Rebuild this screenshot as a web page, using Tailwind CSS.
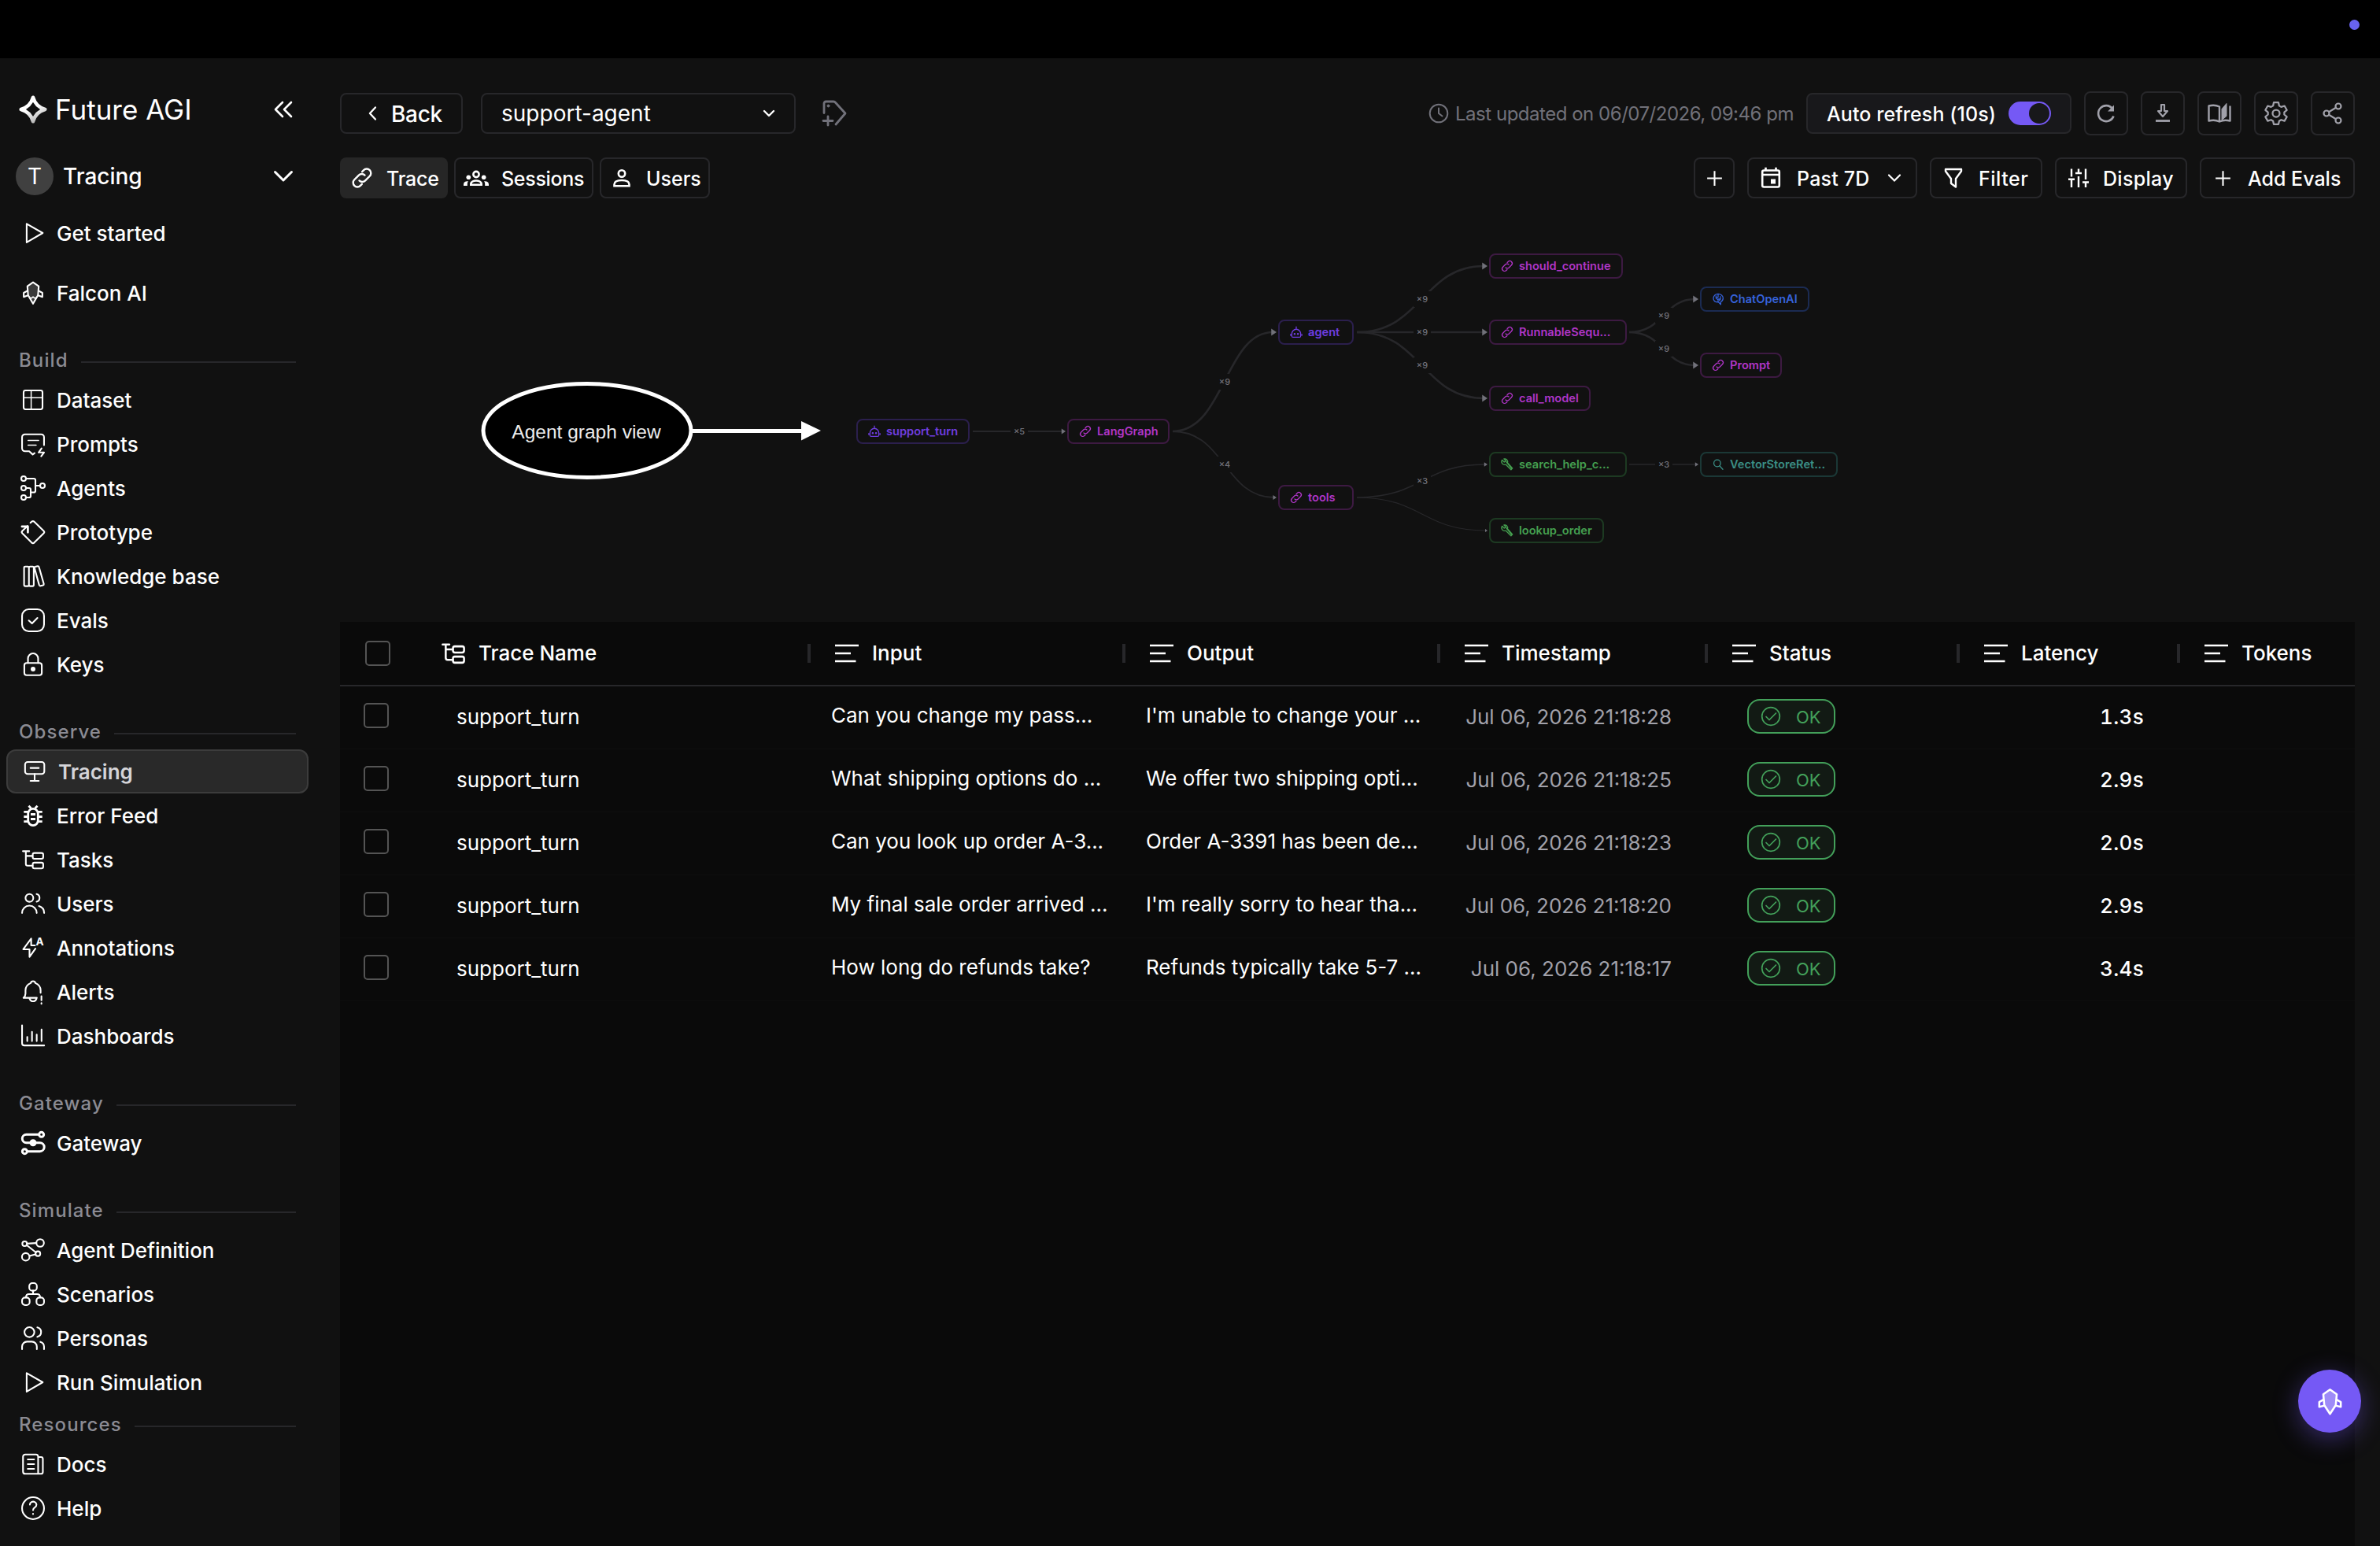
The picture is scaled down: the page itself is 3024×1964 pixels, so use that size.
<!DOCTYPE html>
<html lang="en">
<head>
    <meta charset="UTF-8">
    <meta name="viewport" content="width=device-width, initial-scale=1.0">
    <title>Future AGI - Tracing</title>
    <script src="https://cdn.jsdelivr.net/npm/@tailwindcss/browser@4"></script>
</head>
<body class="w-[3024px] h-[1964px] overflow-hidden bg-[#111111] text-white font-['Inter',sans-serif] flex flex-col">
    <!-- Icon sprite -->
    <svg class="hidden">
        <symbol id="i-play" viewBox="0 0 24 24"><path d="M6.6 4.2 20.2 12 6.6 19.9z"/></symbol>
        <symbol id="i-falcon" viewBox="0 0 24 24"><path d="M12 3.1 16.8 6.4 16.2 14 12 21.2 7.8 14 7.2 6.4z" fill="currentColor" fill-opacity=".18"/><path d="M7.3 10.2 4.1 12v3.5l3.6-1.4M16.7 10.2l3.2 1.8v3.5l-3.6-1.4"/><path d="m8.6 15.4 1.7 1.3 1.7-1.3 1.7 1.3 1.7-1.3" stroke-width="1"/></symbol>
        <symbol id="i-dataset" viewBox="0 0 24 24"><rect x="4" y="4" width="16" height="16" rx="1.6"/><path d="M10.4 4v16M4 10.2h16" stroke-width="1"/></symbol>
        <symbol id="i-prompts" viewBox="0 0 24 24"><path d="M21.3 13V6.3a2.5 2.5 0 0 0-2.5-2.5H5.2a2.5 2.5 0 0 0-2.5 2.5v9.4a2.5 2.5 0 0 0 2.5 2.5h3.5l3 2.7 1.6-1.2"/><path d="M7.8 9h8.9M7.8 13h6.8" stroke-width="1.1"/><path d="m19.2 15.8-2.5 3.4h4.6l-2.4 3.2"/></symbol>
        <symbol id="i-agents" viewBox="0 0 24 24"><circle cx="4" cy="4" r="2"/><circle cx="4" cy="12" r="2"/><circle cx="4" cy="20" r="2"/><circle cx="20" cy="10" r="2"/><path d="M6 4h6.6q1.4 0 1.4 1.4v8.9q0 1.4-1.4 1.4H10M6 12h2.6q1.4 0 1.4 1.4v5.2q0 1.4-1.4 1.4H6M14 10h4"/></symbol>
        <symbol id="i-prototype" viewBox="0 0 24 24"><path d="m9.8 4.1 1-.9q1.1-1 2.2 0l8 7.8q1 1 0 2l-8 7.9q-1.1 1-2.2 0L2.9 13q-1-1 0-2L7.3 6.8"/><path d="M2.6 7.2h5v5" stroke-width="1.8"/></symbol>
        <symbol id="i-books" viewBox="0 0 24 24"><path d="M4.4 4.8q0-1 1-1h2.1q1 0 1 1v14.6q0 1-1 1H5.4q-1 0-1-1zM8.5 4.8q0-1 1-1h2.1q1 0 1 1v14.6q0 1-1 1H9.5q-1 0-1-1zM13.2 5.1q-.3-.9.6-1.1l2-.5q1-.2 1.2.7l4.1 14.3q.2.9-.7 1.2l-2 .5q-.9.2-1.2-.7z"/></symbol>
        <symbol id="i-evals" viewBox="0 0 24 24"><rect x="2.7" y="2.7" width="18.6" height="18.6" rx="5.6"/><path d="m8.4 12.2 2.7 2.4 4.6-4.6"/></symbol>
        <symbol id="i-lock" viewBox="0 0 24 24"><rect x="4.6" y="10.8" width="14.8" height="10.4" rx="2"/><path d="M7.7 10.8V7a4.3 4.3 0 0 1 8.6 0v3.8"/><circle cx="12" cy="16" r="1.3" fill="currentColor"/></symbol>
        <symbol id="i-tracing" viewBox="0 0 24 24"><rect x="3.9" y="4" width="16.3" height="10.2" rx="2.2"/><path d="M8.5 9.1h7M12 14.2V20M8.5 20h7"/></symbol>
        <symbol id="i-bug" viewBox="0 0 24 24"><rect x="7.8" y="6.2" width="8.4" height="14.2" rx="4.2" stroke-width="1.9"/><path d="M4.2 8.9h3.6M4.2 13h3.6M4.2 17.1h3.6M16.2 8.9h3.6M16.2 13h3.6M16.2 17.1h3.6M8.3 3.8l2 2M15.7 3.8l-2 2M10 11h4M10 15h4" stroke-width="1.9" stroke-linecap="butt"/></symbol>
        <symbol id="i-tree" viewBox="0 0 24 24"><path d="M3.4 4.9h5.4M5.9 4.9v10.8q0 1.5 1.5 1.5h4.2M5.9 8.9h5.7"/><rect x="11.7" y="6.4" width="8.9" height="4.9" rx="1.5"/><rect x="11.7" y="14.6" width="8.9" height="4.9" rx="1.5"/></symbol>
        <symbol id="i-users" viewBox="0 0 24 24"><circle cx="8.9" cy="7.1" r="3.3"/><path d="M2.7 19.9a6.2 6.2 0 0 1 12.4 0M15 3.9a3.3 3.3 0 0 1 0 6.4M17 14a6.2 6.2 0 0 1 4.4 5.9"/></symbol>
        <symbol id="i-annot" viewBox="0 0 24 24"><path d="M14 12.7 9 19.7v-6.4H3.7L10.4 4.3V10h3.2"/><text x="14.4" y="10.2" font-size="9" font-weight="700" fill="currentColor" stroke="none" font-family="Inter">A</text></symbol>
        <symbol id="i-alert" viewBox="0 0 24 24"><path d="M15.2 17.1H3.9q1.7-1.4 1.7-3.6v-2.9q0-4 4.4-6a2.05 2.05 0 0 1 4 0q4.4 2 4.4 6v2.2M8.9 17.4a3.2 3.5 0 0 0 6.2 0M19.1 15.7v3.5M19.1 21.6v.5"/></symbol>
        <symbol id="i-dash" viewBox="0 0 24 24"><path d="M2.7 3v15.2q0 1.9 1.9 1.9h16.8M7.1 12.9v3.5M11.1 8.6v7.8M15.1 10.9v5.5M19.2 6.6v9.8"/></symbol>
        <symbol id="i-gateway" viewBox="0 0 24 24"><g stroke-width="2"><circle cx="19.1" cy="4.9" r="2"/><circle cx="4.9" cy="19.1" r="2"/><path d="M17 4.9H6.3a3.4 3.4 0 0 0 0 6.9h11.5a3.6 3.6 0 0 1 0 7.3H7"/><circle cx="12" cy="11.8" r="2" fill="currentColor"/></g></symbol>
        <symbol id="i-agentdef" viewBox="0 0 24 24"><circle cx="4.9" cy="6.7" r="2"/><circle cx="18" cy="6" r="3.2"/><circle cx="5.8" cy="17.8" r="3.2"/><circle cx="16.1" cy="15.1" r="2"/><path d="m6.9 6.6 7.9-.5M6.6 7.8l7.8 6.2M8.9 17l5.2-1.3"/></symbol>
        <symbol id="i-scenarios" viewBox="0 0 24 24"><rect x="8.8" y="2.7" width="6.4" height="6.4" rx="2.5"/><rect x="2.7" y="14.9" width="6.4" height="6.4" rx="2.5"/><rect x="14.9" y="14.9" width="6.4" height="6.4" rx="2.5"/><path d="M12 9.1V12M6 14.9q0-2.9 2.6-2.9h6.8q2.6 0 2.6 2.9"/></symbol>
        <symbol id="i-personas" viewBox="0 0 24 24"><circle cx="8.9" cy="6.9" r="4.2"/><path d="M15.6 2.9a4.1 4.1 0 0 1 0 8M2.7 21.3v-2.2a4.2 4.2 0 0 1 4.2-4.2H11a4.2 4.2 0 0 1 4.2 4.2v2.2M18.2 15.1a4.2 4.2 0 0 1 3.1 4v2.2"/></symbol>
        <symbol id="i-docs" viewBox="0 0 24 24"><path d="M16.3 20.2H5.4a1.9 1.9 0 0 1-1.9-1.9V5.7a1.9 1.9 0 0 1 1.9-1.9h9q1.9 0 1.9 1.9zM16.3 6h2.4q1.6 0 1.6 1.6v11q0 1.6-1.6 1.6h-2.4M7.5 8h5.4M7.5 12h5.4M7.5 16h5.4"/></symbol>
        <symbol id="i-help" viewBox="0 0 24 24"><circle cx="12" cy="12" r="9.3"/><path d="M9.3 9a2.8 2.6 0 1 1 4.3 2.2q-1.6.9-1.6 2.4M12 16.7v.3"/></symbol>
        <symbol id="i-link" viewBox="0 0 24 24"><path d="M14.6 9.4a4 4 0 0 0-5.7 0l-4.2 4.3a4 4 0 0 0 5.7 5.7l1.5-1.5M9.4 14.6a4 4 0 0 0 5.7 0l4.2-4.3a4 4 0 0 0-5.7-5.7l-1.5 1.5"/></symbol>
        <symbol id="i-bot" viewBox="0 0 24 24"><path d="M6.5 20.5h11a2 2 0 0 0 2-2v-3.500a7.500 8 0 0 0-15 0v3.500a2 2 0 0 0 2 2zM12 7V3M2.500 15.500v2M21.500 15.500v2"/><circle cx="9.200" cy="15" r=".9" fill="currentColor"/><circle cx="14.800" cy="15" r=".9" fill="currentColor"/></symbol>
        <symbol id="i-wrench" viewBox="0 0 24 24"><path d="M3.500 4.500 7 8l2.500-2.500L6.500 2.600a5 5 0 0 1 6 6.400l8.500 9.500-2.500 2.500L9.500 12a5 5 0 0 1-6-7.500zM9.500 6.500 19 18.500"/></symbol>
        <symbol id="i-search" viewBox="0 0 24 24"><circle cx="10.5" cy="10" r="5.7"/><path d="m14.500 14.300 5.500 6"/></symbol>
        <symbol id="i-brain" viewBox="0 0 24 24"><path d="M12 3.200a8 7.500 0 0 0-8 7.300c0 4.500 4 6.500 8.500 6.500l4 4v-4.300a7.500 7.500 0 0 0 4-6.200c0-4.300-4-7.300-8.500-7.300zM12 3.500v5l-3.500 2M12 12h4M8.500 6.500v4l3.500 3v3M16 7.500v4.500l-2 2.500"/></symbol>
        <symbol id="i-lines" viewBox="0 0 30 24"><path d="M0 2h30M0 12h20M0 22h26.500" stroke-width="2.6" stroke-linecap="butt"/></symbol>
        <symbol id="i-plus" viewBox="0 0 24 24"><path d="M12 3v18M3 12h18"/></symbol>
    </svg>

    <!-- Top strip -->
    <div class="h-[74px] shrink-0 bg-black flex justify-end items-start pt-[25px] pr-[26px]">
        <div class="size-[13px] rounded-full bg-[#6862ee]"></div>
    </div>

    <div class="flex flex-1 min-h-0">
        <!-- Sidebar -->
        <aside class="w-[400px] shrink-0 flex flex-col">
            <div class="h-[50px] mt-[40px] ml-6 mr-[26px] flex items-center">
                <svg class="size-9" viewBox="0 0 24 24" fill="none" stroke="url(#logoGrad)" stroke-width="3" stroke-linejoin="round">
                    <linearGradient id="logoGrad" gradientUnits="userSpaceOnUse" x1="8" y1="4" x2="16" y2="22">
                        <stop offset="0.4" stop-color="#ffffff"/>
                        <stop offset="1" stop-color="#b5b5b5"/>
                    </linearGradient>
                    <path d="M12 1.800Q14.200 9.800 22.200 12 14.200 14.200 12 22.200 9.800 14.200 1.800 12 9.800 9.800 12 1.800z"/>
                </svg>
                <span class="ml-[10px] text-[35px] leading-none">Future AGI</span>
                <svg class="size-9 ml-auto -mr-[4px]" viewBox="0 0 36 36" fill="none" stroke="#fff" stroke-width="2.6" stroke-linecap="round" stroke-linejoin="round"><path d="m17 9-9 9 9 9M28 9l-9 9 9 9"/></svg>
            </div>
            <div class="h-12 mt-[36px] ml-5 mr-[22px] flex items-center">
                <div class="size-12 rounded-full bg-[#404040] flex items-center justify-center text-[28px] leading-none">T</div>
                <span class="ml-3 text-[28px] leading-none font-medium">Tracing</span>
                <svg class="size-9 ml-auto" viewBox="0 0 36 36" fill="none" stroke="#fff" stroke-width="3" stroke-linecap="round" stroke-linejoin="round"><path d="m7.500 12.500 10.500 10.500 10.500-10.500"/></svg>
            </div>
            <nav id="nav" class="mt-5"></nav>
        </aside>

        <!-- Main -->
        <main class="flex-1 min-w-0 pl-8 pr-8 flex flex-col">
            <!-- Header -->
            <div class="mt-[42px] h-14 flex items-center">
                <button class="w-[156px] h-[52px] border-2 border-[#27272a] rounded-lg flex items-center pl-[26px]">
                    <svg class="size-7" viewBox="0 0 24 24" fill="none" stroke="#fff" stroke-width="2" stroke-linecap="round" stroke-linejoin="round"><path d="M14.500 5.500 8.500 12l6 6.500"/></svg>
                    <span class="ml-[9px] pt-[2px] text-[28px] leading-none font-medium tracking-[-0.3px]">Back</span>
                </button>
                <div class="ml-[23px] w-[400px] h-[52px] border-2 border-[#27272a] rounded-lg flex items-center pl-[24px] pr-[20px]">
                    <span class="text-[28px] leading-none">support-agent</span>
                    <svg class="size-6 ml-auto" viewBox="0 0 24 24" fill="none" stroke="#fff" stroke-width="2.4" stroke-linecap="round" stroke-linejoin="round"><path d="m6 9 6 6 6-6"/></svg>
                </div>
                <svg class="size-9 ml-[32px]" viewBox="0 0 36 36" fill="none" stroke="#71717a" stroke-width="2.8" stroke-linecap="round" stroke-linejoin="round"><path d="M4 17.500V5.500q0-2.500 2.500-2.500H16q1.500 0 2.500 1.200L31 18 19 32"/><circle cx="9.5" cy="8.5" r="1.5" fill="#71717a" stroke-width="1"/><path d="M9 22v11M3 27.500h12"/></svg>

                <div class="ml-auto flex items-center">
                    <svg class="size-[30px]" viewBox="0 0 30 30" fill="none" stroke="#71717a" stroke-width="2" stroke-linecap="round" stroke-linejoin="round"><circle cx="15" cy="15" r="11.3"/><path d="M15 8.500V15l4.500 3.500"/></svg>
                    <span class="ml-[6px] w-[446px] pt-[2px] text-[24px] leading-none text-[#71717a] tracking-[-0.48px] whitespace-nowrap">Last updated on 06/07/2026, 09:46 pm</span>
                    <div class="w-[337px] h-[52px] border-2 border-[#27272a] rounded-lg bg-[#18181b] flex items-center pl-[24px] pr-[24px]">
                        <span class="pt-[2px] text-[25px] leading-none font-medium tracking-[0.08px] whitespace-nowrap">Auto refresh (10s)</span>
                        <div class="ml-auto w-[54px] h-[30px] rounded-full bg-[#7559f5] flex items-center justify-end pr-[2px]">
                            <div class="size-[26px] rounded-full bg-[#18181b]"></div>
                        </div>
                    </div>
                    <div class="ml-4 flex gap-4 text-[#a1a1aa]">
                        <button class="size-14 border-2 border-[#27272a] rounded-lg flex items-center justify-center">
                            <svg class="size-8" viewBox="0 0 32 32" fill="none" stroke="currentColor" stroke-width="2.6"><path d="M25.500 19.500a10 10 0 1 1-1.500-9.500"/><path d="M26 5.500v8h-8z" fill="currentColor" stroke="none"/></svg>
                        </button>
                        <button class="size-14 border-2 border-[#27272a] rounded-lg flex items-center justify-center">
                            <svg class="size-8" viewBox="0 0 32 32" fill="none" stroke="currentColor" stroke-width="2.2" stroke-linejoin="round"><path d="M14 5h4v8h4l-6 7-6-7h4z"/><path d="M7 25.500h18" stroke-width="2.8"/></svg>
                        </button>
                        <button class="size-14 border-2 border-[#27272a] rounded-lg flex items-center justify-center">
                            <svg class="size-9" viewBox="0 0 36 36" fill="none" stroke="currentColor" stroke-width="2.4" stroke-linejoin="round"><path d="M18 9.500Q12 6.500 4.500 8.500v19q7.500-2 13.500 1V9.500zM18 28.500q6-3 13.500-1v-19"/><path d="m21 12.500 6-7v16l-6 5z" fill="currentColor" stroke-width="1"/></svg>
                        </button>
                        <button class="size-14 border-2 border-[#27272a] rounded-lg flex items-center justify-center">
                            <svg class="size-9" viewBox="0 0 24 24" fill="none" stroke="currentColor" stroke-width="1.5" stroke-linejoin="round"><circle cx="12" cy="12" r="3"/><path d="M10 2.800h4l.6 2.800 1.700 1 2.800-.9 2 3.500-2.200 1.900v1.900l2.200 1.900-2 3.500-2.800-.9-1.700 1-.6 2.700h-4l-.6-2.700-1.700-1-2.800.9-2-3.500 2.200-1.900v-1.900L2.900 9.200l2-3.500 2.800.9 1.700-1z"/></svg>
                        </button>
                        <button class="size-14 border-2 border-[#27272a] rounded-lg flex items-center justify-center">
                            <svg class="size-8" viewBox="0 0 32 32" fill="none" stroke="currentColor" stroke-width="2.2"><circle cx="8" cy="16" r="3.5"/><circle cx="23" cy="7" r="3.5"/><circle cx="23" cy="25" r="3.5"/><path d="m11 14.200 9-5.400M11 17.800l9 5.400"/></svg>
                        </button>
                    </div>
                </div>
            </div>

            <!-- Tabs and filters -->
            <div class="mt-[28px] h-[52px] flex items-center text-[25px] leading-none font-medium">
                <button class="w-[137px] h-[52px] rounded-lg bg-[#262626] flex items-center pl-[12px]">
                    <svg class="size-8" fill="none" stroke="#fff" stroke-width="1.8" stroke-linecap="round"><use href="#i-link"/></svg>
                    <span class="ml-[15px] pt-[2px] tracking-[-0.2px]">Trace</span>
                </button>
                <button class="ml-2 w-[177px] h-[52px] border-2 border-[#27272a] rounded-lg flex items-center pl-[10px]">
                    <svg class="size-8" viewBox="0 0 32 32" fill="#fff"><path d="M8 26v-2.500q0-2.700 2.800-4 2.300-1.200 5.200-1.200t5.200 1.200q2.800 1.300 2.800 4V26zM0 26v-2q0-2.500 2.800-3.400 1.500-.5 3.200-.3-1.200 1.400-1.200 3.200V26zM32 26v-2q0-2.500-2.800-3.400-1.500-.5-3.200-.3 1.200 1.400 1.200 3.200V26z"/><path d="M10.700 23.600q.3-2.800 5.300-2.800t5.300 2.800z" fill="#111"/><circle cx="16" cy="11.5" r="3.6" fill="none" stroke="#fff" stroke-width="2.6"/><circle cx="6.3" cy="15.2" r="2.8"/><circle cx="25.7" cy="15.2" r="2.8"/></svg>
                    <span class="ml-[16px] pt-[2px] tracking-[-0.3px]">Sessions</span>
                </button>
                <button class="ml-2 w-[140px] h-[52px] border-2 border-[#27272a] rounded-lg flex items-center pl-[10px]">
                    <svg class="size-8" viewBox="0 0 32 32" fill="none" stroke="#fff" stroke-width="2.6"><circle cx="16" cy="10.5" r="4.2"/><path d="M6.500 26.200v-2q0-5.200 9.500-5.200t9.500 5.200v2z"/></svg>
                    <span class="ml-[15px] pt-[2px]">Users</span>
                </button>

                <div class="ml-auto flex gap-4">
                    <button class="w-[52px] h-[52px] border-2 border-[#27272a] rounded-lg flex items-center justify-center">
                        <svg class="size-[25px]" fill="none" stroke="#fff" stroke-width="2"><use href="#i-plus"/></svg>
                    </button>
                    <button class="w-[216px] h-[52px] border-2 border-[#27272a] rounded-lg flex items-center pl-[12px]">
                        <svg class="size-8" viewBox="0 0 32 32" fill="none" stroke="#fff" stroke-width="2.6"><rect x="5.2" y="6.5" width="21.6" height="21" rx="2"/><path d="M5 12h22M9.500 2.800v4M22.500 2.800v4"/><rect x="16" y="17.5" width="6" height="6" fill="#fff" stroke="none"/></svg>
                        <span class="ml-[17px] pt-[2px] tracking-[0.2px]">Past 7D</span>
                        <svg class="size-6 ml-[19px]" viewBox="0 0 24 24" fill="none" stroke="#fff" stroke-width="2.2" stroke-linecap="round"><path d="m5 8.500 7 7 7-7"/></svg>
                    </button>
                    <button class="w-[143px] h-[52px] border-2 border-[#27272a] rounded-lg flex items-center pl-[12px]">
                        <svg class="size-8" viewBox="0 0 32 32" fill="none" stroke="#fff" stroke-width="2.4" stroke-linejoin="round"><path d="M6 5h20v2.500l-7 9.500v10.500l-6-4.500v-6L6 7.500z"/></svg>
                        <span class="ml-[16px] pt-[2px] tracking-[0.5px]">Filter</span>
                    </button>
                    <button class="w-[168px] h-[52px] border-2 border-[#27272a] rounded-lg flex items-center pl-[12px]">
                        <svg class="size-8" viewBox="0 0 32 32" fill="none" stroke="#fff" stroke-width="2.4"><path d="M7 4.500v10M7 19v9M16 4.500v5M16 14v14M25 4.500V18M25 22.500V28M3 17.800h8M12 10h8M21 21.500h8"/></svg>
                        <span class="ml-[15px] pt-[2px] tracking-[0.3px]">Display</span>
                    </button>
                    <button class="w-[197px] h-[52px] border-2 border-[#27272a] rounded-lg flex items-center pl-[15px]">
                        <svg class="size-[25px]" fill="none" stroke="#fff" stroke-width="2"><use href="#i-plus"/></svg>
                        <span class="ml-[19px] pt-[2px]">Add Evals</span>
                    </button>
                </div>
            </div>

            <!-- Agent graph: free canvas, node coordinates are canvas pixels -->
            <div class="relative h-[538px] shrink-0">
                <svg class="absolute inset-0 w-full h-full" viewBox="432 252 2560 538" fill="none">
                    <g id="edges" stroke="#27272a"></g>
                    <ellipse cx="746" cy="547" rx="132" ry="59.5" fill="#000" stroke="#fff" stroke-width="5"/>
                    <path d="M880 547.500h142" stroke="#fff" stroke-width="5"/>
                    <path d="M1018 535v24.500l25-12.500z" fill="#fff"/>
                </svg>
                <div class="absolute left-[181px] top-[285px] w-[264px] text-center text-[24.5px] leading-none text-[#ececec] font-['Liberation_Sans',sans-serif] whitespace-nowrap">Agent graph view</div>
                <div id="nodes"></div>
            </div>

            <!-- Trace table -->
            <div class="flex-1 min-h-0 bg-[#0a0a0a]">
                <div id="thead" class="h-[82px] border-b-2 border-[#27272a] flex items-center text-[26px] leading-none font-medium overflow-hidden"></div>
                <div id="rows"></div>
            </div>
        </main>
    </div>

    <!-- Floating assistant button -->
    <button class="absolute left-[2920px] top-[1740px] size-20 rounded-full bg-[#7559f5] shadow-[0_8px_32px_rgba(117,89,245,0.4)] flex items-center justify-center">
        <svg class="size-[41px]" viewBox="0 0 24 24" fill="none" stroke="#fff" stroke-width="1.5" stroke-linejoin="round"><path d="M12 3.100 17 6.600 16.300 14.600 12 21.200 7.700 14.600 7 6.600z" fill="#fff" fill-opacity=".3"/><path d="M7.300 10.500 4 12.300v3.700l4-1M16.700 10.500l3.300 1.800V16l-4-1"/></svg>
    </button>

    <script>
        const icon = (name, cls, width = 1.4) =>
            `<svg class="${cls}" fill="none" stroke="currentColor" stroke-width="${width}" stroke-linecap="round" stroke-linejoin="round"><use href="#i-${name}"/></svg>`;

        // Sidebar
        const item = ([name, label]) => `
            <a class="h-14 pl-6 flex items-center">
                ${icon(name, 'size-9 shrink-0')}
                <span class="ml-3 pt-[2px] text-[26px] leading-none font-medium">${label}</span>
            </a>`;
        const active = ([name, label]) => `
            <a class="h-14 ml-2 w-[384px] pl-4 flex items-center rounded-xl border-2 border-[#3c3c3c] bg-[#292929]">
                ${icon(name, 'size-9 shrink-0')}
                <span class="ml-3 pt-[2px] text-[26px] leading-none font-semibold text-[#d4d4d8]">${label}</span>
            </a>`;
        const heading = (label, gap) => `
            <div class="${gap} h-10 pl-6 mr-6 flex items-center gap-4">
                <span class="pb-[4px] text-[24px] leading-none font-medium tracking-[1.1px] text-[#8b8b93]">${label}</span>
                <div class="flex-1 h-[2px] bg-[#27272a]"></div>
            </div>`;

        document.getElementById('nav').innerHTML =
            item(['play', 'Get started']) +
            '<div class="h-5"></div>' +
            item(['falcon', 'Falcon AI']) +
            heading('Build', 'mt-10') +
            [['dataset', 'Dataset'], ['prompts', 'Prompts'], ['agents', 'Agents'], ['prototype', 'Prototype'], ['books', 'Knowledge base'], ['evals', 'Evals'], ['lock', 'Keys']].map(item).join('') +
            heading('Observe', 'mt-10') +
            active(['tracing', 'Tracing']) +
            [['bug', 'Error Feed'], ['tree', 'Tasks'], ['users', 'Users'], ['annot', 'Annotations'], ['alert', 'Alerts'], ['dash', 'Dashboards']].map(item).join('') +
            heading('Gateway', 'mt-10') +
            item(['gateway', 'Gateway']) +
            heading('Simulate', 'mt-10') +
            [['agentdef', 'Agent Definition'], ['scenarios', 'Scenarios'], ['personas', 'Personas'], ['play', 'Run Simulation']].map(item).join('') +
            heading('Resources', 'mt-2') +
            [['docs', 'Docs'], ['help', 'Help']].map(item).join('');

        // Graph nodes: x, center y, width, icon, label, kind
        const kinds = {
            agent: 'border-[#2b1f4d] text-[#6f3de0]',
            chain: 'border-[#3d1a42] text-[#b035c8]',
            llm: 'border-[#1b2b52] text-[#3562dc]',
            tool: 'border-[#1d3a22] text-[#45a050]',
            retriever: 'border-[#1b3836] text-[#3b8f86]'
        };
        const nodes = [
            [1089, 548, 144, 'bot', 'support_turn', 'agent'],
            [1357, 548, 130, 'link', 'LangGraph', 'chain'],
            [1625, 422, 96, 'bot', 'agent', 'agent'],
            [1625, 632, 96, 'link', 'tools', 'chain'],
            [1893, 338, 170, 'link', 'should_continue', 'chain'],
            [1893, 422, 175, 'link', 'RunnableSequ...', 'chain'],
            [1893, 506, 129, 'link', 'call_model', 'chain'],
            [1893, 590, 175, 'wrench', 'search_help_c...', 'tool'],
            [1893, 674, 146, 'wrench', 'lookup_order', 'tool'],
            [2161, 380, 139, 'brain', 'ChatOpenAI', 'llm'],
            [2161, 464, 104, 'link', 'Prompt', 'chain'],
            [2161, 590, 175, 'search', 'VectorStoreRet...', 'retriever']
        ];
        // Graph edges: from x, y, to x, y, line width, arrow size, label
        const edges = [
            [1236, 548, 1354, 548, 2, 3.5, '×5'],
            [1490, 548, 1622, 422, 2.6, 4.5, '×9'],
            [1490, 548, 1622, 632, 1.8, 3, '×4'],
            [1724, 422, 1890, 338, 2.6, 4.5, '×9'],
            [1724, 422, 1890, 422, 2.6, 4.5, '×9'],
            [1724, 422, 1890, 506, 2.6, 4.5, '×9'],
            [2070, 422, 2158, 380, 2.6, 4.5, '×9'],
            [2070, 422, 2158, 464, 2.6, 4.5, '×9'],
            [1724, 632, 1890, 590, 1.6, 2.8, '×3'],
            [1724, 632, 1890, 674, 1.2, 2, ''],
            [2070, 590, 2158, 590, 1.6, 2.8, '×3']
        ];
        document.getElementById('edges').innerHTML = edges.map(([x1, y1, x2, y2, w, a]) => {
            const m = (x1 + x2) / 2;
            return `<path stroke-width="${w}" d="M${x1} ${y1}C${m} ${y1} ${m} ${y2} ${x2 - a} ${y2}"/>
                <path d="M${x2 - a * 1.5} ${y2 - a}v${a * 2}L${x2} ${y2}z" fill="#71717a" stroke="none"/>`;
        }).join('');
        document.getElementById('nodes').innerHTML =
            edges.filter(e => e[6]).map(([x1, y1, x2, y2, , , t]) =>
                `<div class="absolute w-[22px] h-[20px] -translate-x-1/2 -translate-y-1/2 bg-[#111111] flex items-center justify-center text-[11px] leading-none font-medium text-[#71717a]" style="left:${(x1 + x2) / 2 - 432}px;top:${(y1 + y2) / 2 - 252}px">${t}</div>`).join('') +
            nodes.map(([x, y, w, i, t, k]) =>
                `<div class="absolute h-8 border-2 rounded-lg flex items-center pl-[12px] text-[14.6px] leading-none font-semibold whitespace-nowrap ${kinds[k]}" style="left:${x - 433}px;top:${y - 16 - 252}px;width:${w}px">${icon(i, 'size-[18px]', 1.7)}<span class="ml-[6px]">${t}</span></div>`).join('');

        // Table header
        const cols = [['Input', 'w-[400px]'], ['Output', 'w-[400px]'], ['Timestamp', 'w-[340px]'], ['Status', 'w-[320px]'], ['Latency', 'w-[280px]'], ['Tokens', 'w-[226px]']];
        document.getElementById('thead').innerHTML = `
            <div class="w-[594px] shrink-0 flex items-center pl-8">
                <div class="size-8 rounded-[5px] border-2 border-[#545454]"></div>
                ${icon('tree', 'size-[38px] ml-[61px]', 1.6)}
                <span class="ml-[13px]">Trace Name</span>
            </div>` +
            cols.map(([label, w]) => `
            <div class="${w} shrink-0 flex items-center">
                <div class="w-[4px] h-6 bg-[#27272a]"></div>
                ${icon('lines', 'w-[30px] h-6 ml-[31px]')}
                <span class="ml-[17px]">${label}</span>
            </div>`).join('');

        // Table rows
        const rows = [
            ['Can you change my pass...', "I'm unable to change your ...", 'Jul 06, 2026 21:18:28', '1.3s'],
            ['What shipping options do ...', 'We offer two shipping opti...', 'Jul 06, 2026 21:18:25', '2.9s'],
            ['Can you look up order A-3...', 'Order A-3391 has been de...', 'Jul 06, 2026 21:18:23', '2.0s'],
            ['My final sale order arrived ...', "I'm really sorry to hear tha...", 'Jul 06, 2026 21:18:20', '2.9s'],
            ['How long do refunds take?', 'Refunds typically take 5-7 ...', 'Jul 06, 2026 21:18:17', '3.4s']
        ];
        document.getElementById('rows').innerHTML = rows.map(([input, output, time, latency]) => `
            <div class="h-20 border-b-2 border-[#0c0c0c] flex items-center text-[26px] leading-none whitespace-nowrap">
                <div class="w-[148px] shrink-0 pl-[30px] pb-1"><div class="size-8 rounded-[5px] border-2 border-[#545454]"></div></div>
                <div class="w-[476px] shrink-0">support_turn</div>
                <div class="w-[400px] shrink-0 pb-[4px]">${input}</div>
                <div class="w-[400px] shrink-0 pb-[4px]">${output}</div>
                <div class="w-[268px] shrink-0 text-right text-[#a1a1aa]">${time}</div>
                <div class="w-[96px] shrink-0"></div>
                <div class="w-[112px] h-11 shrink-0 rounded-2xl border-2 border-[#43a05a] bg-[#121a14] text-[#43a05a] flex items-center pl-[14px] -mt-[2px]">
                    <svg class="size-[28px]" viewBox="0 0 28 28" fill="none" stroke="currentColor" stroke-width="1.7" stroke-linecap="round" stroke-linejoin="round"><circle cx="14" cy="14" r="11.3"/><path d="m8 14.500 4 4L20.500 10"/></svg>
                    <span class="ml-[18px] pt-[2px] text-[22px] leading-none">OK</span>
                </div>
                <div class="w-[392px] shrink-0 text-right font-medium tracking-[0.3px] tabular-nums">${latency}</div>
            </div>`).join('');
    </script>
</body>
</html>
